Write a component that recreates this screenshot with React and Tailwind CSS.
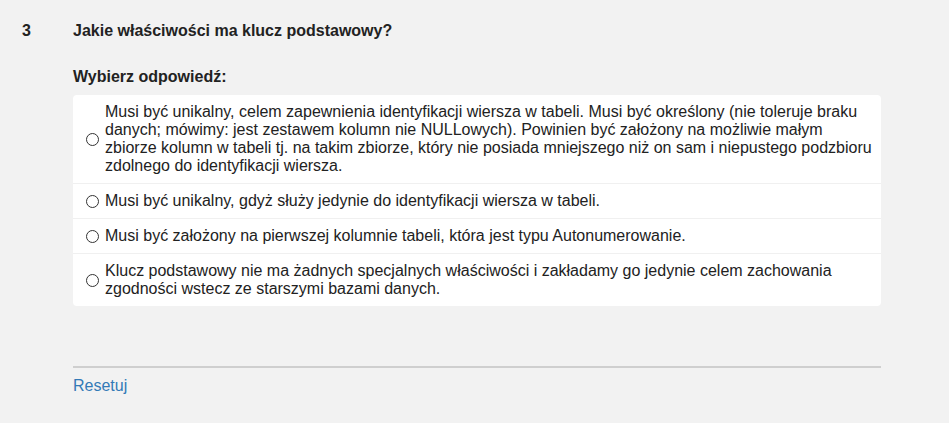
import { useState } from "react";

const answers = [
  "Musi być unikalny, celem zapewnienia identyfikacji wiersza w tabeli. Musi być określony (nie toleruje braku danych; mówimy: jest zestawem kolumn nie NULLowych). Powinien być założony na możliwie małym zbiorze kolumn w tabeli tj. na takim zbiorze, który nie posiada mniejszego niż on sam i niepustego podzbioru zdolnego do identyfikacji wiersza.",
  "Musi być unikalny, gdyż służy jedynie do identyfikacji wiersza w tabeli.",
  "Musi być założony na pierwszej kolumnie tabeli, która jest typu Autonumerowanie.",
  "Klucz podstawowy nie ma żadnych specjalnych właściwości i zakładamy go jedynie celem zachowania zgodności wstecz ze starszymi bazami danych.",
];

export default function App() {
  const [picked, setPicked] = useState(null);

  return (
    <div className="min-h-screen bg-[#f2f2f2] text-[#222] font-['Liberation_Sans',Arial,sans-serif] text-[16px]">
      <div className="flex pt-[22px]">
        <div className="w-[73px] pl-[22px] font-bold leading-[18px]">3</div>
        <div className="w-[808px]">
          <h2 className="font-bold leading-[18px]">Jakie właściwości ma klucz podstawowy?</h2>

          <p className="mt-[28px] font-bold leading-[18px]">Wybierz odpowiedź:</p>

          <div className="mt-[9px] bg-white rounded">
            {answers.map((a, i) => (
              <label
                key={i}
                className={
                  "flex items-center gap-[6px] pl-[13px] pr-[8px] py-[8px] leading-[18px] cursor-pointer" +
                  (i > 0 ? " border-t border-[#f0f0f0]" : "")
                }
              >
                <input
                  type="radio"
                  name="q3"
                  checked={picked === i}
                  onChange={() => setPicked(i)}
                  className="appearance-none w-[13px] h-[13px] m-0 shrink-0 rounded-full border border-[#333] bg-white checked:border-[4px] checked:border-[#0075ff]"
                />
                <span>{a}</span>
              </label>
            ))}
          </div>

          <div className="mt-[60px] border-t-2 border-[#cfcfcf] pt-[6px]">
            <button
              onClick={() => setPicked(null)}
              className="text-[#337ab7] leading-[18px] hover:underline"
            >
              Resetuj
            </button>
          </div>
        </div>
      </div>
    </div>
  );
}
